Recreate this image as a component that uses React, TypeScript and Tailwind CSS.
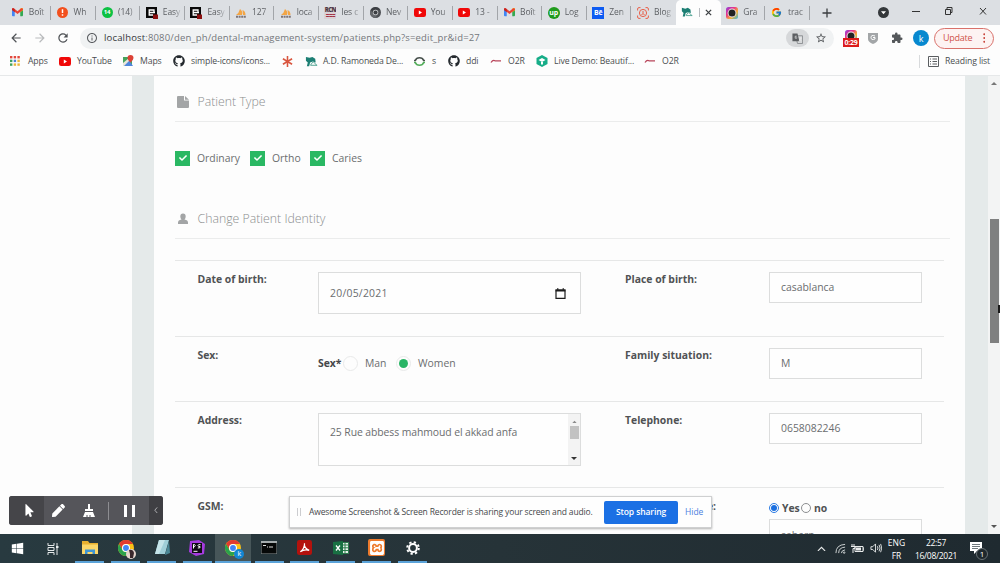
import React from "react";
import type { ReactNode } from "react";
import { FaCheck, FaGithub, FaPen, FaWindows, FaMousePointer } from "react-icons/fa";
import { FcGoogle } from "react-icons/fc";
import { MdInfoOutline, MdStarBorder, MdArrowBack, MdArrowForward, MdRefresh, MdExtension } from "react-icons/md";
import { SiXampp } from "react-icons/si";

const ui = "font-['Open_Sans','Noto_Sans',sans-serif]";

function Gmail({ className }: { className?: string }) {
  return (
    <svg viewBox="0 0 24 18" className={className}>
      <path d="M0 2v14q0 2 2 2h4V6L0 2z" fill="#4285f4" />
      <path d="M24 2v14q0 2-2 2h-4V6l6-4z" fill="#34a853" />
      <path d="M18 1l4-1q2 0 2 2v3l-6 4V1z" fill="#fbbc04" />
      <path d="M0 2.500Q0-1 4 .8L12 7l8-6.200Q23 0 24 2v2L12 13 0 4z" fill="#ea4335" />
      <path d="M0 2q1-2 3-1.500L6 2.500V9L0 4.500z" fill="#c5221f" />
    </svg>
  );
}

function Easy() {
  return (
    <svg viewBox="0 0 12 12" className="size-3">
      <path d="M0 0h11v11H0z" fill="#080808" />
      <path d="M9 5.500H3.200V3H8v2.500M3.200 5.500V8H7" stroke="#fff" strokeWidth="1.300" fill="none" />
      <path d="M7 7.500h5V12H7z" fill="#8c1111" />
    </svg>
  );
}

function Pma() {
  return (
    <svg viewBox="0 0 12 12" className="size-3">
      <path d="M1 8Q4 6 5 2q3 2 2 6zM7.500 3q3 1 3 5H8z" fill="#f3a545" />
      <path d="M1 9.800h10" stroke="#7d7478" strokeWidth="2" strokeDasharray="2 .6" />
    </svg>
  );
}

function Sailboat({ className }: { className?: string }) {
  return (
    <svg viewBox="0 0 14 12" className={className}>
      <path d="M1 1l4 1 3-1 3 2 .5 4-3-1-3 1-1 4H2l1-4L1 5z" fill="#1d7f74" />
      <path d="M7 8q2-3 4 0t2 2H6z" fill="none" stroke="#4aa08f" />
    </svg>
  );
}

function Chrome({ className, mono = false }: { className?: string; mono?: boolean }) {
  return (
    <svg viewBox="0 0 24 24" className={className}>
      <circle cx="12" cy="12" r="12" fill={mono ? "#4d5054" : "#fbc116"} />
      <path d="M1.600 6A12 12 0 0 1 22.400 6H12a6 6 0 0 0-5.200 9z" fill={mono ? "#3c3f43" : "#e33b2e"} />
      <path d="M1.600 6A12 12 0 0 0 12 24l5.200-9A6 6 0 0 1 6.800 15z" fill={mono ? "#65686c" : "#2ba24c"} />
      <circle cx="12" cy="12" r="6" fill={mono ? "#d0d2d4" : "#fff"} />
      <circle cx="12" cy="12" r="4.400" fill={mono ? "#3c3f43" : "#4285f4"} />
    </svg>
  );
}

function Recorder({ className }: { className?: string }) {
  return (
    <svg viewBox="0 0 12 12" className={className}>
      <defs>
        <linearGradient id="rec" x1="0" y1="0" x2="1" y2="1">
          <stop offset="0" stopColor="#8b3fe0" />
          <stop offset=".35" stopColor="#e8348a" />
          <stop offset=".65" stopColor="#f9b233" />
          <stop offset="1" stopColor="#2fb5e8" />
        </linearGradient>
      </defs>
      <rect width="12" height="12" rx="2.500" fill="url(#rec)" />
      <circle cx="6" cy="6" r="4.400" fill="#f3e9ee" />
      <circle cx="6" cy="6" r="3.500" fill="#222" />
    </svg>
  );
}

function Tube({ className }: { className?: string }) {
  return (
    <svg viewBox="0 0 12 9" className={className}>
      <rect width="12" height="9" rx="2.200" fill="#f00808" />
      <path d="M4.800 2.600v3.800L8 4.500z" fill="#fff" />
    </svg>
  );
}

const tabs: { icon: ReactNode; label: string }[] = [
  { icon: <Gmail className="w-[11px]" />, label: "Boît" },
  {
    icon: (
      <svg viewBox="0 0 12 12" className="size-[11px]">
        <circle cx="6" cy="6" r="6" fill="#f2501e" />
        <path d="M6 2.500v4M6 8v1.500" stroke="#fff" strokeWidth="1.600" />
      </svg>
    ),
    label: "Wh",
  },
  { icon: <span className="flex size-[11px] items-center justify-center rounded-full bg-[#0cc143] text-[6px] font-bold text-white">14</span>, label: "(14)" },
  { icon: <Easy />, label: "Easy" },
  { icon: <Easy />, label: "Easy" },
  { icon: <Pma />, label: "127" },
  { icon: <Pma />, label: "loca" },
  {
    icon: (
      <span className="flex h-3 w-3 flex-col items-center overflow-hidden bg-[#d9d2d6] text-[6px] leading-[6px] font-black tracking-[-0.5px] text-[#4c3844]">
        <span>RCN</span>
        <span className="text-[#a33145]">===</span>
      </span>
    ),
    label: "les c",
  },
  { icon: <Chrome mono className="size-[11px]" />, label: "Nev" },
  { icon: <Tube className="w-3" />, label: "You" },
  { icon: <Tube className="w-3" />, label: "13 -" },
  { icon: <Gmail className="w-[11px]" />, label: "Boît" },
  { icon: <span className="flex size-3 items-center justify-center rounded-full bg-[#1f9b1c] text-[7px] leading-none font-bold text-white">up</span>, label: "Log" },
  { icon: <span className="flex size-3 items-center justify-center bg-[#0d5bf2] text-[7px] leading-none font-bold text-white">Bē</span>, label: "Zen" },
  {
    icon: (
      <svg viewBox="0 0 12 12" className="size-3" fill="none" stroke="#e8614a">
        <path d="M.6 3.500V2Q.6.6 2 .6h1.500M8.500.6H10q1.400 0 1.400 1.400v1.500M11.400 8.500V10q0 1.400-1.400 1.400H8.500M3.500 11.400H2Q.6 11.400.6 10V8.500" />
        <circle cx="6" cy="6" r="3.600" />
        <path d="M6 4v2.500L4.500 8M6 6.500L7.500 8" />
      </svg>
    ),
    label: "Blog",
  },
  { icon: <Sailboat className="w-3" />, label: "" },
  { icon: <Recorder className="size-3" />, label: "Gra" },
  { icon: <FcGoogle className="size-[11px]" />, label: "trac" },
];

function TabBar() {
  return (
    <div className="flex h-[25px] bg-[#dcdfe3] pl-[6.300px] text-[8.500px] tracking-[-0.100px] text-[#5d6064]">
      {tabs.map((tab, i) =>
        i === 15 ? (
          <div key={i} className="flex w-[44.670px] items-center rounded-t-[5px] bg-[#fdfdfd] pl-[5px]">
            {tab.icon}
            <i className="ml-[6px] h-[9px] w-px bg-[#b9bcc0]" />
            <svg viewBox="0 0 8 8" className="ml-[5px] size-[7px]" stroke="#3c4043" strokeWidth="1.500">
              <path d="M1 1l6 6M7 1L1 7" />
            </svg>
          </div>
        ) : (
          <div key={i} className="flex w-[44.670px] items-center pl-[5.500px]">
            <span className="flex w-3 shrink-0 justify-center">{tab.icon}</span>
            <span className="ml-[5px] w-[19px] mask-r-from-60% whitespace-nowrap">{tab.label}</span>
            {i !== 14 && <i className="ml-auto h-[14px] w-px bg-[#a2a5a9]" />}
          </div>
        ),
      )}
      <div className="flex flex-1 items-center">
        <svg viewBox="0 0 10 10" className="ml-[12px] size-[10px]" stroke="#3a3d40" strokeWidth="1.300">
          <path d="M5 .5v9M.5 5h9" />
        </svg>
        <svg viewBox="0 0 11 11" className="ml-[46px] size-[11px]">
          <circle cx="5.500" cy="5.500" r="5.500" fill="#35383b" />
          <path d="M3 4.300h5L5.500 7.300z" fill="#fff" />
        </svg>
        <svg viewBox="0 0 76 10" className="mb-1 ml-[22px] h-[10px] w-[76px]" stroke="#333" fill="none">
          <path d="M1 5.500h8M69 2l6 6.500M75 2l-6 6.500" />
          <path d="M34.500 3.500h5v5h-5zM36 3.500v-2h5v5h-1.500" />
        </svg>
      </div>
    </div>
  );
}

function Toolbar() {
  return (
    <div className="flex h-[26px] items-center bg-[#fdfdfd] pl-[9px]">
      <MdArrowBack className="size-[14px] text-[#505357]" />
      <MdArrowForward className="ml-[10px] size-[14px] text-[#b9bbbd]" />
      <MdRefresh className="ml-[9px] size-[14px] text-[#505357]" />
      <div className="ml-[10px] flex h-[21px] w-[754px] items-center rounded-full bg-[#f0f2f3] pl-[6px]">
        <MdInfoOutline className="size-[12px] text-[#5a5d61]" />
        <span className="ml-[6px] w-[600px] text-[9.500px] leading-none tracking-[0.160px] whitespace-nowrap text-[#74777b]">
          <span className="text-[#34373a]">localhost</span>:8080/den_ph/dental-management-system/patients.php?s=edit_pr&amp;id=27
        </span>
        <span className="ml-auto flex h-[18px] w-[23px] items-center justify-center rounded-full bg-[#d6d8da]">
          <svg viewBox="0 0 12 12" className="size-[11px]">
            <path d="M4 3h7.500v8.500H6z" fill="none" stroke="#8a8d90" />
            <path d="M.5.500H6L8 9H.5z" fill="#5c5f62" />
            <path d="M5.200 3.500H3.500v2.200h1.700V4.800M8 5.500h3M9.500 5v1L7.500 9M8.500 7L10.500 9" fill="none" stroke="#eee" strokeWidth=".7" />
          </svg>
        </span>
        <MdStarBorder className="mr-[7px] ml-[6px] size-[12px] text-[#55585b]" />
      </div>
      <div className="relative ml-[9px] h-4 w-4">
        <Recorder className="mx-auto size-3" />
        <span className="absolute top-[8px] left-0 h-[9px] w-4 bg-[#dc1c1c] text-center text-[7px] leading-[9px] font-bold tracking-[-0.200px] text-white">0:29</span>
      </div>
      <svg viewBox="0 0 10 12" className="ml-[9px] h-3 w-[10px]">
        <path d="M0 1h10v6q0 3-5 5Q0 10 0 7z" fill="#a3a6a8" />
        <path d="M7 4Q3 2.500 3 5.500T7 7V5.500H5" fill="none" stroke="#fff" />
      </svg>
      <MdExtension className="ml-[13px] size-[12px] text-[#55585b]" />
      <span className="ml-[10px] flex size-4 items-center justify-center rounded-full bg-[#0788cf] text-[9px] leading-none text-white">k</span>
      <div className="ml-[5px] flex h-[21px] w-[60px] items-center rounded-full border border-[#d9716b] bg-[#fdf3f2] pl-[8px] text-[9px] tracking-[-0.250px] text-[#d0544c]">
        Update
        <svg viewBox="0 0 3 12" className="mr-2 ml-auto h-[10px]" fill="#c9453c">
          <circle cx="1.500" cy="1.500" r="1.200" />
          <circle cx="1.500" cy="6" r="1.200" />
          <circle cx="1.500" cy="10.500" r="1.200" />
        </svg>
      </div>
    </div>
  );
}

function Bookmark({ icon, label, width, gap }: { icon: ReactNode; label: string; width: string; gap: string }) {
  return (
    <div className={`flex shrink-0 items-center whitespace-nowrap ${width} ${gap}`}>
      {icon}
      {label && <span>{label}</span>}
    </div>
  );
}

const redLine = (
  <svg viewBox="0 0 12 6" className="w-3" fill="none" stroke="#b8455a" strokeWidth="1.300">
    <path d="M1 4.500Q3 1.500 5 2.800h6" />
  </svg>
);

function Bookmarks() {
  return (
    <div className="flex h-[25px] items-center border-b border-[#e6e8e9] bg-[#fdfdfd] pb-[3px] pl-[10px] text-[8.700px] tracking-[-0.130px] text-[#4a4d50]">
      <Bookmark
        width="w-[49px]"
        gap="gap-[8px]"
        label="Apps"
        icon={
          <svg viewBox="0 0 10 10" className="size-[10px]">
            {["#e2483d", "#e2483d", "#e2483d", "#3fa15d", "#4f82d8", "#e9b43b", "#3fa15d", "#e9b43b", "#e9b43b"].map((c, i) => (
              <rect key={i} x={(i % 3) * 3.7} y={Math.floor(i / 3) * 3.7} width="2.400" height="2.400" fill={c} />
            ))}
          </svg>
        }
      />
      <Bookmark width="w-[63px]" gap="gap-[6px]" label="YouTube" icon={<Tube className="w-3" />} />
      <Bookmark
        width="w-[51px]"
        gap="gap-[6px]"
        label="Maps"
        icon={
          <svg viewBox="0 0 12 12" className="size-3">
            <path d="M1 2h9v9H1z" fill="#46a35c" />
            <path d="M1 11l6-6 4 6z" fill="#4f86dc" />
            <path d="M1 8l6-5 1 2-6 6H1z" fill="#e9e6da" />
            <path d="M8.500 0a3 3 0 0 1 3 3q0 2-3 4.500Q5.500 5 5.500 3a3 3 0 0 1 3-3z" fill="#dc4236" />
          </svg>
        }
      />
      <Bookmark width="w-[109px]" gap="gap-[6px]" label="simple-icons/icons..." icon={<FaGithub className="size-3 text-[#24292e]" />} />
      <Bookmark
        width="w-[23px]"
        gap="gap-0"
        label=""
        icon={
          <svg viewBox="0 0 12 12" className="size-[11px]" stroke="#d9563f" strokeWidth="1.700">
            <path d="M6 0v12M1 3l10 6M11 3L1 9" />
          </svg>
        }
      />
      <Bookmark width="w-[109px]" gap="gap-[5px]" label="A.D. Ramoneda De..." icon={<Sailboat className="w-[13px]" />} />
      <Bookmark
        width="w-[34px]"
        gap="gap-[7px]"
        label="s"
        icon={
          <svg viewBox="0 0 12 12" className="size-[11px]" fill="none" strokeWidth="1.700">
            <path d="M0 5h1.500q1-3 4.500-3t4.500 3H12" stroke="#47504c" />
            <path d="M12 7h-1.500q-1 3-4.500 3T1.500 7H0" stroke="#54ad5b" />
          </svg>
        }
      />
      <Bookmark width="w-[42px]" gap="gap-[6px]" label="ddi" icon={<FaGithub className="size-3 text-[#24292e]" />} />
      <Bookmark width="w-[46px]" gap="gap-[6px]" label="O2R" icon={redLine} />
      <Bookmark
        width="w-[108px]"
        gap="gap-[6px]"
        label="Live Demo: Beautif..."
        icon={
          <svg viewBox="0 0 12 12" className="size-3">
            <path d="M6 0l5.500 3v6L6 12 .5 9V3z" fill="#17ad88" />
            <path d="M6 3l3.500 2L6 7 2.500 5zM5 7h2v2.500H5z" fill="#fff" />
          </svg>
        }
      />
      <Bookmark width="w-[50px]" gap="gap-[6px]" label="O2R" icon={redLine} />
      <div className="ml-auto flex items-center border-l border-[#d8dadc] pr-[10px] pl-[8px]">
        <svg viewBox="0 0 11 11" className="size-[11px]" fill="none" stroke="#5a5d60">
          <path d="M.5.500h10v10H.5zM2 3h1M2 5.500h1M2 8h1M4.500 3H9M4.500 5.500H9M4.500 8H9" />
        </svg>
        <span className="ml-[6px] whitespace-nowrap">Reading list</span>
      </div>
    </div>
  );
}

function SectionTitle({ icon, children }: { icon: ReactNode; children: ReactNode }) {
  return (
    <h2 className="flex h-[39px] shrink-0 items-center border-b border-[#ebecec] text-[12.300px] font-light text-[#8b8d8e]">
      <span className="flex w-[22.500px] pl-[1.500px] text-[#a3a5a6]">{icon}</span>
      {children}
    </h2>
  );
}

function Check({ label, width }: { label: string; width: string }) {
  return (
    <label className={`flex items-center gap-[7px] ${width}`}>
      <span className="flex size-[15px] shrink-0 items-center justify-center bg-[#2ab863]">
        <FaCheck className="size-[8px] text-white" />
      </span>
      {label}
    </label>
  );
}

function Row({ height, left, field, right, field2 }: { height: string; left: string; field: ReactNode; right: ReactNode; field2: ReactNode }) {
  return (
    <div className={`grid w-[769px] shrink-0 grid-cols-[120.500px_307px_144px_153px] border-t border-[#e6e7e7] pt-[11px] pl-[22.500px] ${height}`}>
      <b className="font-bold text-[#505254]">{left}</b>
      <div>{field}</div>
      <b className="font-bold text-[#505254]">{right}</b>
      <div>{field2}</div>
    </div>
  );
}

const box = "flex items-center border border-[#dcdddd] bg-[#fefefe] pl-[11px]";

function Radio({ on = false }: { on?: boolean }) {
  return (
    <span className="flex size-[15px] items-center justify-center rounded-full border border-[#e9eaea]">
      {on && <i className="size-[9px] rounded-full bg-[#2ab566]" />}
    </span>
  );
}

function Page() {
  return (
    <div className="flex h-[458px] overflow-hidden bg-[#e5eaea]">
      <aside className="mr-[22px] w-[132px] shrink-0 bg-[#fdfdfd]" />
      <main className="flex w-[811px] shrink-0 flex-col overflow-hidden bg-[#fdfdfd] pt-[7px] pr-[15px] pl-[21px] text-[10.400px] leading-[14px] text-[#6b6d6f]">
        <SectionTitle
          icon={
            <svg viewBox="0 0 12 12" className="size-3" fill="currentColor">
              <path d="M1 0h6v4.500h5V11q0 1-1 1H1q-1 0-1-1V1q0-1 1-1zM8 0l4 3.700H8z" />
            </svg>
          }
        >
          Patient Type
        </SectionTitle>
        <div className="flex h-[72px] shrink-0 items-center">
          <Check label="Ordinary" width="w-[75px]" />
          <Check label="Ortho" width="w-[60px]" />
          <Check label="Caries" width="w-[60px]" />
        </div>
        <div className="h-[6px] shrink-0" />
        <SectionTitle
          icon={
            <svg viewBox="0 0 12 12" className="size-3" fill="currentColor">
              <path d="M3.300 3.500a2.700 3 0 0 1 5.400 0q0 2-1.200 3 3.500.5 3.500 3V11H1V9.500q0-2.500 3.500-3-1.200-1-1.200-3z" />
            </svg>
          }
        >
          Change Patient Identity
        </SectionTitle>
        <div className="h-[21px] shrink-0" />
        <Row
          height="h-[76px]"
          left="Date of birth:"
          field={
            <div className={`${box} h-[42px] w-[263px]`}>
              <span className="tracking-[0.250px]">20/05/2021</span>
              <svg viewBox="0 0 11 11" className="mr-[14px] ml-auto size-[11px]" fill="none" stroke="#1c1c1c">
                <path d="M1 2h9v8.300H1z" strokeWidth="1.200" />
                <path d="M.6 2.500h9.800" strokeWidth="2" />
                <path d="M2.800 0v2M8.200 0v2" />
              </svg>
            </div>
          }
          right="Place of birth:"
          field2={<div className={`${box} h-[31px] pb-[2px]`}>casablanca</div>}
        />
        <Row
          height="h-[65px]"
          left="Sex:"
          field={
            <div className="flex h-[31px] items-center pb-px">
              <b className="w-[25px] text-[#454749]">Sex*</b>
              <Radio />
              <span className="ml-[7px] w-[31px]">Man</span>
              <Radio on />
              <span className="ml-[7px]">Women</span>
            </div>
          }
          right="Family situation:"
          field2={<div className={`${box} h-[31px] pb-[2px]`}>M</div>}
        />
        <Row
          height="h-[86px]"
          left="Address:"
          field={
            <div className="flex h-[53px] w-[263px] border border-[#dcdddd] bg-[#fefefe] pt-[11px] pl-[11px]">
              <span className="tracking-[-0.080px]">25 Rue abbess mahmoud el akkad anfa</span>
              <div className="-mt-[11px] ml-auto flex w-[12px] flex-col items-center bg-[#f3f3f3]">
                <svg viewBox="0 0 6 4" className="mt-[6px] w-[5px]" fill="#8a8a8a">
                  <path d="M0 4l3-3 3 3z" />
                </svg>
                <i className="mt-[3px] h-[13px] w-[9px] bg-[#c2c2c2]" />
                <svg viewBox="0 0 6 4" className="mt-auto mb-[4px] w-[6px]" fill="#333">
                  <path d="M0 0l3 3 3-3z" />
                </svg>
              </div>
            </div>
          }
          right="Telephone:"
          field2={<div className={`${box} h-[31px] pb-[2px]`}>0658082246</div>}
        />
        <Row
          height="h-[80px]"
          left="GSM:"
          field={null}
          right={<span className="block w-[91px] text-right">e:</span>}
          field2={
            <>
              <div className="flex h-[17px] items-center font-bold text-[#505254]">
                <span className="flex size-[10px] items-center justify-center rounded-full border border-[#2a7be4]">
                  <i className="size-[6px] rounded-full bg-[#1a6fe0]" />
                </span>
                <span className="ml-[3px] w-[19px]">Yes</span>
                <span className="size-[10px] rounded-full border border-[#8c8e90]" />
                <span className="ml-[3px]">no</span>
              </div>
              <div className={`${box} mt-[3px] h-[31px]`}>sabern</div>
            </>
          }
        />
      </main>
      <div className="ml-auto flex w-3 flex-col items-center bg-[#f3f4f4]">
        <svg viewBox="0 0 6 4" className="mt-[5px] w-[6px]" fill="#777">
          <path d="M0 4l3-3 3 3z" />
        </svg>
        <i className="mt-[134px] h-[124px] w-[9px] bg-[#7f8080]" />
        <svg viewBox="0 0 6 4" className="mt-auto mb-[5px] w-[6px]" fill="#555">
          <path d="M0 0l3 3 3-3z" />
        </svg>
      </div>
    </div>
  );
}

function TaskButton({ children, active = false }: { children: ReactNode; active?: boolean }) {
  return (
    <div className={`flex h-full w-[35.850px] flex-col items-center ${active ? "bg-[#475659]" : ""}`}>
      <div className="flex flex-1 items-center">{children}</div>
      <i className={`h-[2px] bg-[#5ba3d9] ${active ? "w-full" : "w-[29px]"}`} />
    </div>
  );
}

function Taskbar() {
  return (
    <div className="flex h-[29px] bg-linear-to-r from-[#283a40] via-[#263338] via-50% to-[#1f2a30] text-white">
      <div className="flex w-[72px] items-center pl-[11px]">
        <FaWindows className="size-[13px]" />
        <svg viewBox="0 0 12 12" className="ml-[23px] size-[12px]" fill="none" stroke="#e5e9ea">
          <path d="M1 0v2.500h6V0M1 12V9.500h6V12M1 4.500h6v3H1zM10 0v12" />
          <path d="M9 4h2.500" strokeWidth="2" />
        </svg>
      </div>
      <TaskButton>
        <svg viewBox="0 0 16 13" className="w-4">
          <path d="M0 0h6l1.500 2H16v11H0z" fill="#e8b030" />
          <path d="M0 3.500h16V13H0z" fill="#fbd669" />
          <path d="M3 13V8.500h10V13h-2.500v-2h-5v2z" fill="#3e95d4" />
        </svg>
      </TaskButton>
      <TaskButton>
        <span className="relative">
          <Chrome className="size-[16px]" />
          <svg viewBox="0 0 10 10" className="absolute -right-[2px] -bottom-[3px] size-[10px]">
            <circle cx="5" cy="5" r="5" fill="#e4d5cd" />
            <path d="M3 1q4-1 5 3L7 9H4V5z" fill="#39282c" />
          </svg>
        </span>
      </TaskButton>
      <TaskButton>
        <svg viewBox="0 0 16 15" className="w-4">
          <path d="M5 0h10l-4 14H1z" fill="#9fcfd8" />
          <path d="M5 0h6L5 14H1z" fill="#c5e5ea" />
          <path d="M15 1l1 12-5 2z" fill="#4b8896" />
        </svg>
      </TaskButton>
      <TaskButton>
        <svg viewBox="0 0 16 16" className="w-4">
          <path d="M1 1l9-1 6 4-1 10-8 2-7-4z" fill="#a63be0" />
          <path d="M3 3h10v10H3z" fill="#100b16" />
          <path d="M4.500 8.500v-4h1q1.500 1 0 2.200h-1M11.500 4.700q-2.500-.5-2.500.8t2 1q1 1.700-2.200 1.500M4.500 11.300h4" fill="none" stroke="#fff" />
        </svg>
      </TaskButton>
      <TaskButton active>
        <span className="relative">
          <Chrome className="size-[16px]" />
          <span className="absolute -right-[3px] -bottom-[3px] flex size-[10px] items-center justify-center rounded-full bg-[#1287d4] text-[7px] leading-none">k</span>
        </span>
      </TaskButton>
      <TaskButton>
        <svg viewBox="0 0 16 13" className="w-4">
          <path d="M0 0h16v13H0z" fill="#060808" stroke="#8c9496" />
          <path d="M0 1h16" stroke="#a5acae" strokeWidth="2" />
          <path d="M2 4.500h3M6 6h1M8 6h4" stroke="#ddd" />
        </svg>
      </TaskButton>
      <TaskButton>
        <svg viewBox="0 0 16 16" className="size-[15px]">
          <rect width="16" height="16" rx="2.500" fill="#b4120d" />
          <path d="M3.500 12.500C6 11 8.500 7 8 3.500q-1 4.500 5 7.500-5-1.500-9.500 1.500z" fill="none" stroke="#fff" strokeWidth="1.300" />
        </svg>
      </TaskButton>
      <TaskButton>
        <svg viewBox="0 0 16 14" className="w-4">
          <path d="M8 1.500h7.500v11H8z" fill="#e8f1eb" stroke="#2b7b4c" />
          <path d="M9 4h6M9 6.800h6M9 9.500h6M12 2v10" stroke="#2b7b4c" />
          <path d="M0 1l10-1v14L0 13z" fill="#197043" />
          <path d="M3 4.500l4 5M7 4.500l-4 5" stroke="#fff" strokeWidth="1.300" />
        </svg>
      </TaskButton>
      <TaskButton>
        <span className="flex size-[17px] items-center justify-center rounded-[2px] bg-[#ee7b2d]">
          <SiXampp className="size-[14px]" />
        </span>
      </TaskButton>
      <TaskButton>
        <svg viewBox="0 0 14 14" className="size-[14px]" fill="none" stroke="#fff">
          <circle cx="7" cy="7" r="3.900" strokeWidth="2" />
          <circle cx="7" cy="7" r="5.800" strokeWidth="2" strokeDasharray="2.280 2.280" />
        </svg>
      </TaskButton>
      <div className="ml-auto flex items-center pr-[17px]">
        <svg viewBox="0 0 10 6" className="w-[9px]" fill="none" stroke="#e8eaea" strokeWidth="1.200">
          <path d="M1 5.500l4-4 4 4" />
        </svg>
        <svg viewBox="0 0 12 12" className="ml-[9px] size-[11px]" fill="none" stroke="#d8dcdc">
          <path d="M1 11Q1 2 11 1.500M4 11Q4 5 11 4.500M7 11q0-3 4-3.500" />
          <circle cx="10" cy="10.500" r=".8" />
        </svg>
        <svg viewBox="0 0 13 10" className="ml-[5px] w-[13px]" fill="none" stroke="#e8eaea">
          <path d="M4 2.500h8v5H4zM12 4h1v2h-1M1 0v2M3 0v2M0 2.500h4v2H2V9" />
          <path d="M5 5h5" strokeWidth="3" />
        </svg>
        <svg viewBox="0 0 13 11" className="ml-[6px] w-[12px]" fill="none" stroke="#e8eaea">
          <path d="M1 4h2l3-3v9L3 7H1zM8 3.500q1.300 2 0 4M9.800 2q2.300 3.500 0 7M11.500 1q2.500 4.500 0 9" />
        </svg>
        <div className="ml-[5px] w-[19px] text-center text-[8.500px] leading-[13px]">
          <div>ENG</div>
          <div>FR</div>
        </div>
        <div className="ml-[8px] w-[44px] text-center text-[8.500px] leading-[13px] tracking-[-0.300px] whitespace-nowrap">
          <div>22:57</div>
          <div>16/08/2021</div>
        </div>
        <span className="relative ml-[12px]">
          <svg viewBox="0 0 13 13" className="w-[13px]">
            <path d="M0 0h12v9H7l-3 3V9H0z" fill="#fff" />
            <path d="M2 2.500h8M2 4.500h8M2 6.500h6" stroke="#49545a" strokeWidth=".8" />
          </svg>
          <span className="absolute -right-[5px] -bottom-[5px] flex size-[12px] items-center justify-center rounded-full border border-[#697175] bg-[#1e282d] text-[8px] leading-none">1</span>
        </span>
      </div>
    </div>
  );
}

function RecorderBar() {
  return (
    <div className="absolute top-[496px] left-[9px] flex h-[29px] w-[154px] items-center overflow-hidden rounded-[3px] bg-[#55555a] text-white">
      <span className="flex h-full w-[35px] items-center justify-center bg-[#454549] pl-[5px]">
        <FaMousePointer className="size-[13px]" />
      </span>
      <FaPen className="ml-[8px] size-[13px]" />
      <svg viewBox="0 0 12 14" className="ml-[18px] h-[14px] w-3" fill="#fff">
        <path d="M5 0h2v5h3v2H2V5h3zM2 8h8l2 5H0z" />
        <path d="M4 13v-2M7 13v-2" stroke="#55555a" />
      </svg>
      <i className="ml-[13px] h-[18px] w-px bg-[#8d8d91]" />
      <i className="ml-[15px] h-3 w-[3px] bg-white" />
      <i className="ml-[5px] h-3 w-[3px] bg-white" />
      <span className="ml-auto flex h-full w-[14px] items-center justify-center bg-[#3f3f43]">
        <svg viewBox="0 0 5 8" className="w-[4px]" fill="none" stroke="#c9c9cc">
          <path d="M4 .5L1 4l3 3.500" />
        </svg>
      </span>
    </div>
  );
}

function ShareNotice() {
  return (
    <div className="absolute top-[496px] left-[289px] flex h-[32px] w-[423px] items-center border border-[#cfd0d1] bg-[#fefefe] text-[8.500px] whitespace-nowrap text-[#45484b] shadow-[0_1px_2px_rgba(0,0,0,0.3)]">
      <i className="ml-[7px] h-[8px] w-[4px] border-x border-[#cccdd0]" />
      <span className="ml-[8px] w-[295px] tracking-[-0.150px]">Awesome Screenshot &amp; Screen Recorder is sharing your screen and audio.</span>
      <button className="flex h-[23px] w-[74px] items-center justify-center rounded-[2px] bg-[#1b70e4] font-semibold tracking-[-0.100px] text-white">Stop sharing</button>
      <a className="ml-[7px] text-[#4d7fe0]">Hide</a>
    </div>
  );
}

export default function App() {
  return (
    <div className={`relative h-[563px] w-[1000px] overflow-hidden ${ui}`}>
      <TabBar />
      <Toolbar />
      <Bookmarks />
      <Page />
      <Taskbar />
      <RecorderBar />
      <ShareNotice />
      <svg viewBox="0 0 3 12" className="absolute top-[303px] left-[998px] h-3 w-[2px]">
        <path d="M0 0h3v12H0z" fill="#1b1b1b" />
      </svg>
    </div>
  );
}
